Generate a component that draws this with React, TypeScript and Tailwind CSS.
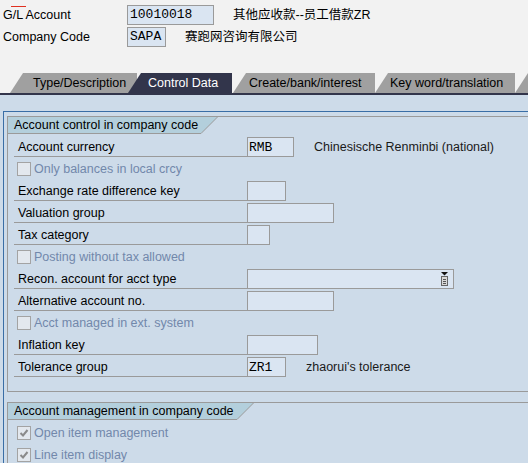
import React from 'react';

const FONT = "font-['Liberation_Sans','Noto_Sans_CJK_SC',sans-serif]";
const MONO = "font-['Liberation_Mono',monospace]";

function Field({ w, value, icon }: { w: string; value?: string; icon?: boolean }) {
  return (
    <div className={`${w} h-[20px] mt-[1px] border border-[#9a9a9a] bg-[#dae5f2] flex items-center justify-between pl-[1px] pr-[4px] ${MONO} text-[13px] text-black leading-none`}>
      <span>{value}</span>
      {icon && <F4Icon />}
    </div>
  );
}

function F4Icon() {
  return (
    <svg width="9" height="14" viewBox="0 0 9 14">
      <polygon points="1,0 8,0 4.5,3.5" fill="#111" />
      <rect x="1.5" y="4.5" width="6" height="9" fill="#d8d8d8" stroke="#666" />
      <line x1="3" y1="7.5" x2="6" y2="7.5" stroke="#555" />
      <line x1="3" y1="9.5" x2="6" y2="9.5" stroke="#555" />
      <line x1="3" y1="11.5" x2="6" y2="11.5" stroke="#555" />
    </svg>
  );
}

function Row({ label, field, text }: { label: string; field: React.ReactNode; text?: { ml: string; s: string } }) {
  return (
    <div className="h-[22px] flex items-start">
      <div className="ml-[6px] w-[233px] h-[21px] border-b border-[#9a9a9a] pl-[4px] pt-[2px] flex items-center text-black">
        {label}
      </div>
      {field}
      {text && <div className={`${text.ml} h-[21px] pt-[2px] flex items-center text-[#1a1a1a]`}>{text.s}</div>}
    </div>
  );
}

function Check({ label, checked }: { label: string; checked?: boolean }) {
  return (
    <div className="h-[22px] flex items-start">
      <div className="ml-[9px] mt-[4px] w-[14px] h-[14px] border border-[#a3a3a3] bg-[#e3e8ee] flex items-center justify-center">
        {checked && (
          <svg width="10" height="10" viewBox="0 0 10 10">
            <polyline points="1.5,5 4,7.5 8.5,2" fill="none" stroke="#8a8a8a" strokeWidth="2" />
          </svg>
        )}
      </div>
      <div className="ml-[3px] h-[21px] pt-[2px] flex items-center text-[#7288ab]">{label}</div>
    </div>
  );
}

function GroupHeader({ title }: { title: string }) {
  return (
    <div className="flex h-[17px]">
      <div className="bg-[#b3cfdc] border-b border-[#9a9a9a] pl-[6px] pr-[3px] pt-[1px] flex items-center text-black leading-none">
        {title}
      </div>
      <svg width="17" height="17" viewBox="0 0 17 17" className="block">
        <polygon points="0,0 16.5,0 0,16.5" fill="#b3cfdc" />
        <line x1="0" y1="16.5" x2="16.5" y2="0" stroke="#9a9a9a" />
      </svg>
    </div>
  );
}

function Tab({ label, active, className }: { label: string; active?: boolean; className: string }) {
  return (
    <div
      className={`shrink-0 h-[20px] pt-[1px] flex items-center [clip-path:polygon(13px_0,100%_0,100%_100%,0_100%)] ${
        active ? 'bg-[#32354b] text-white' : 'bg-[#a0a0a0] text-black'
      } ${className}`}
    >
      {label}
    </div>
  );
}

export default function App() {
  return (
    <div className={`w-[528px] h-[463px] overflow-hidden bg-[#cddbe9] ${FONT} text-[12.5px]`}>
      {/* header fields */}
      <div className="bg-[#f2f2f2] h-[95px] flex flex-col pt-[5px]">
        <div className="h-[20px] flex items-center">
          <div className="w-[127px] shrink-0 pl-[3px] pt-[1px] text-black">
            <span className="relative">
              G/L Account
              <span className="absolute left-[8px] top-[-2px] w-[15px] h-[1px] bg-[#e03020]" />
            </span>
          </div>
          <div className={`w-[87px] h-[20px] border border-[#9a9a9a] bg-[#dae5f2] flex items-center pl-[2px] ${MONO} text-[13px]`}>10010018</div>
          <div className="ml-[19px] text-[12.5px] text-black">其他应收款--员工借款ZR</div>
        </div>
        <div className="h-[20px] mt-[2px] flex items-center">
          <div className="w-[127px] shrink-0 pl-[3px] pt-[1px] text-black">Company Code</div>
          <div className={`w-[39px] h-[20px] border border-[#9a9a9a] bg-[#dae5f2] flex items-center pl-[2px] ${MONO} text-[13px]`}>SAPA</div>
          <div className="ml-[19px] text-[12.5px] text-black">赛跑网咨询有限公司</div>
        </div>

        {/* tab strip */}
        <div className="mt-auto h-[22px] border-b-2 border-[#32354b] flex items-end pl-[10px] overflow-hidden">
          <Tab label="Type/Description" className="w-[127px] pl-[23px]" />
          <Tab label="Control Data" active className="w-[104px] ml-[-9px] pl-[20px]" />
          <Tab label="Create/bank/interest" className="w-[142px] ml-[1px] pl-[16px]" />
          <Tab label="Key word/translation" className="w-[140px] pl-[15px]" />
          <Tab label="" className="w-[40px]" />
        </div>
      </div>

      {/* content panel */}
      <div className="ml-[3px] mt-[16px] border-l border-t border-[#3a6ea6] pl-[3px] pt-[4px] h-[400px]">
        <div className="border-l border-t border-b border-[#9a9a9a] h-[276px]">
          <GroupHeader title="Account control in company code" />
          <div className="mt-[2px]">
            <Row label="Account currency" field={<Field w="w-[47px]" value="RMB" />} text={{ ml: 'ml-[20px]', s: 'Chinesische Renminbi (national)' }} />
            <Check label="Only balances in local crcy" />
            <Row label="Exchange rate difference key" field={<Field w="w-[39px]" />} />
            <Row label="Valuation group" field={<Field w="w-[87px]" />} />
            <Row label="Tax category" field={<Field w="w-[23px]" />} />
            <Check label="Posting without tax allowed" />
            <Row label="Recon. account for acct type" field={<Field w="w-[207px]" icon />} />
            <Row label="Alternative account no." field={<Field w="w-[87px]" />} />
            <Check label="Acct managed in ext. system" />
            <Row label="Inflation key" field={<Field w="w-[71px]" />} />
            <Row label="Tolerance group" field={<Field w="w-[39px]" value="ZR1" />} text={{ ml: 'ml-[20px]', s: "zhaorui's tolerance" }} />
          </div>
        </div>

        <div className="mt-[10px] border-l border-t border-[#9a9a9a]">
          <GroupHeader title="Account management in company code" />
          <div className="mt-[2px]">
            <Check label="Open item management" checked />
            <Check label="Line item display" checked />
          </div>
        </div>
      </div>
    </div>
  );
}
